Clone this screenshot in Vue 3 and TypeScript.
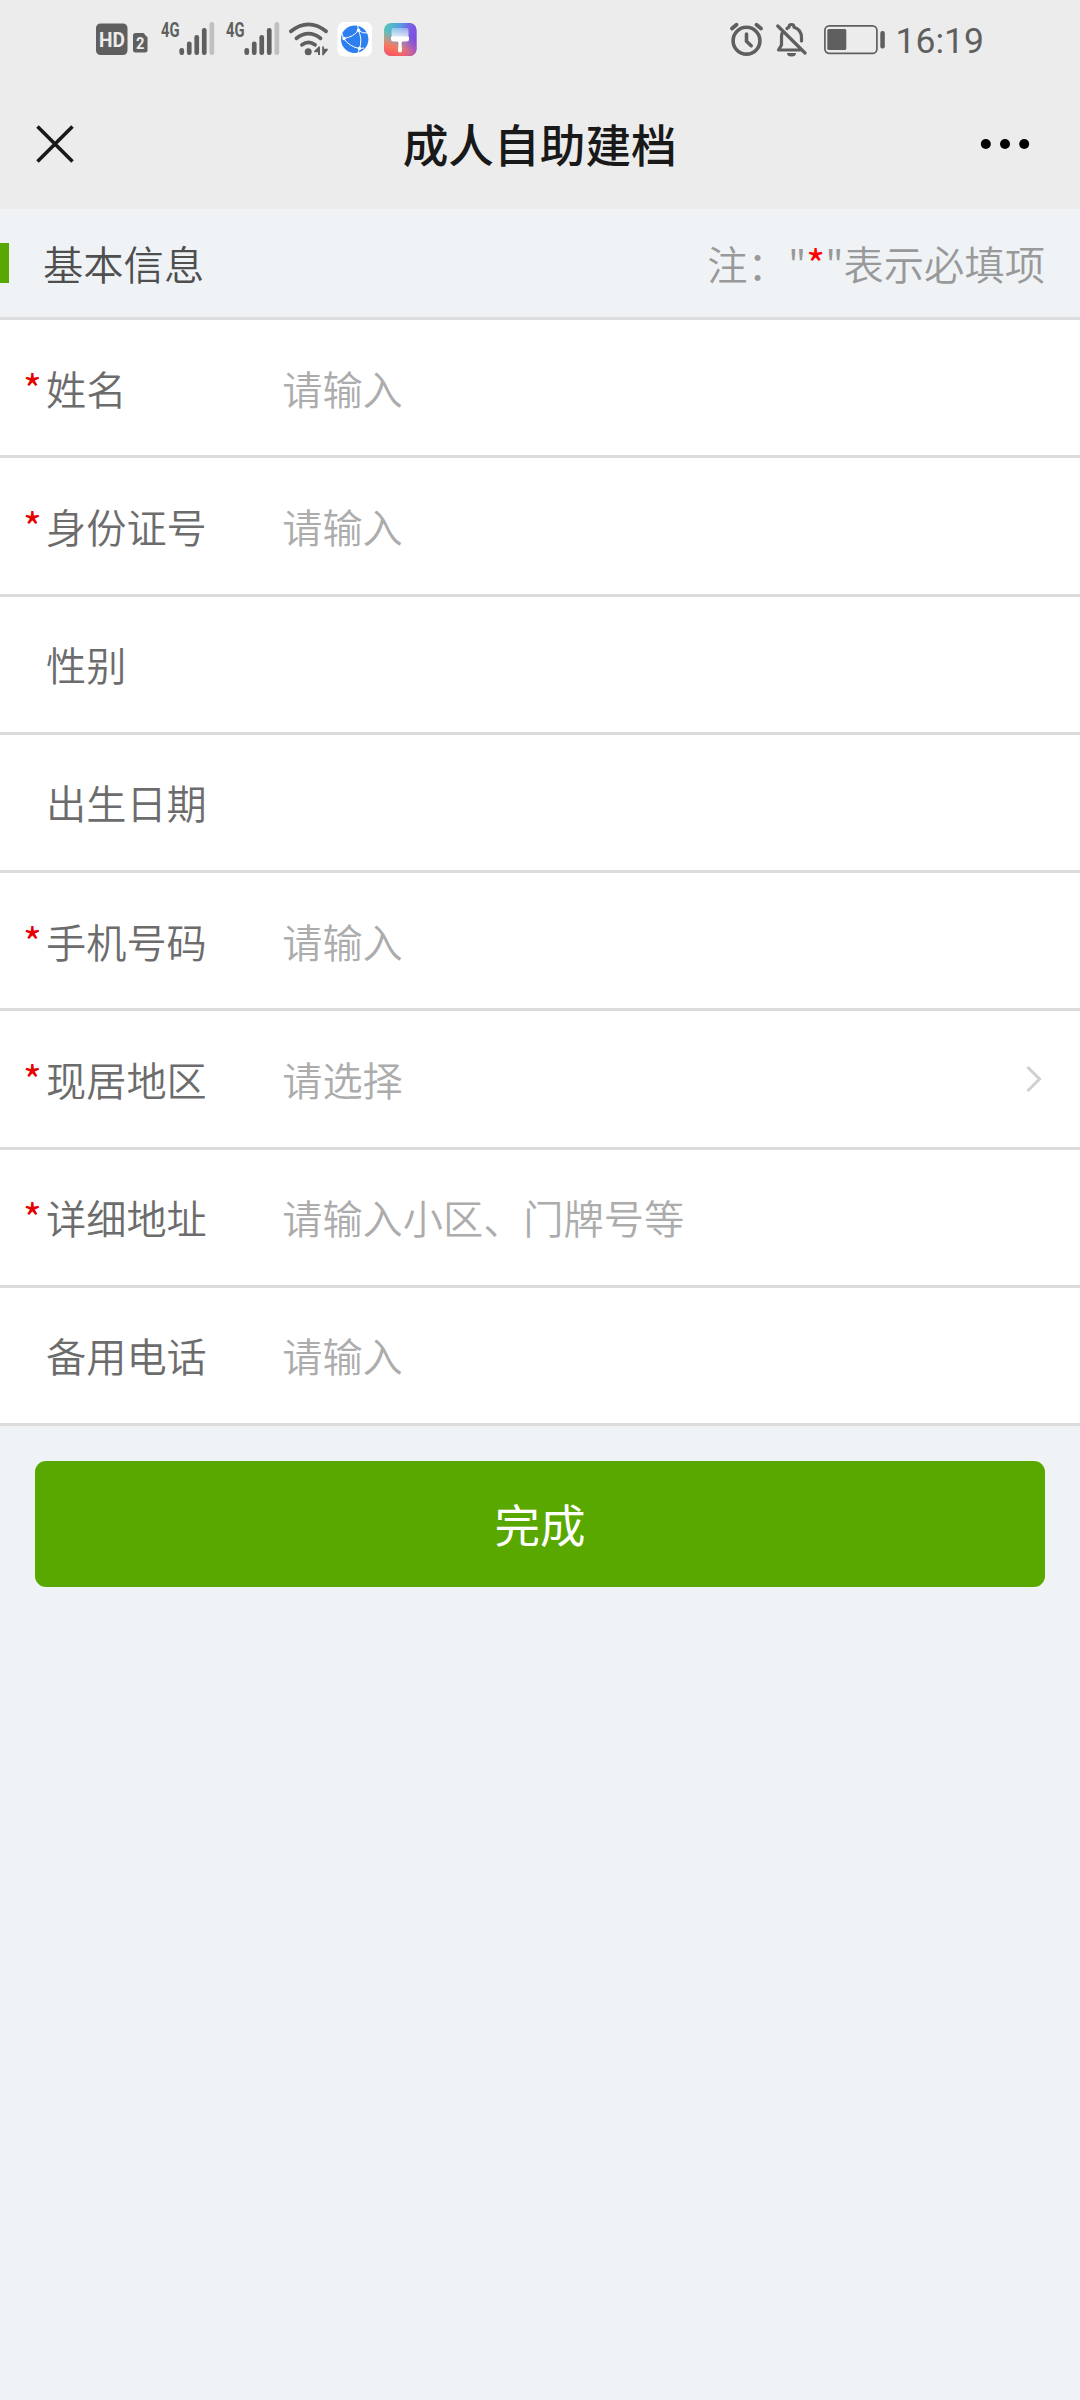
<script setup lang="ts">
interface Field {
  label: string
  required: boolean
  hint: string
  picker?: boolean
}

const fields: Field[] = [
  { label: '姓名', required: true, hint: '请输入' },
  { label: '身份证号', required: true, hint: '请输入' },
  { label: '性别', required: false, hint: '' },
  { label: '出生日期', required: false, hint: '' },
  { label: '手机号码', required: true, hint: '请输入' },
  { label: '现居地区', required: true, hint: '请选择', picker: true },
  { label: '详细地址', required: true, hint: '请输入小区、门牌号等' },
  { label: '备用电话', required: false, hint: '请输入' },
]

const sims = [1, 2]
</script>

<template>
  <div class="page">
    <header class="top">
      <div class="status">
        <div class="status-left">
          <svg class="hd" width="52" height="36" viewBox="0 0 52 36">
            <rect x="0" y="2.5" width="31.5" height="31.5" rx="4.5" fill="#5f5f5f" />
            <text x="3" y="25.5" font-size="20.5" font-weight="700" fill="#ececec" textLength="26" lengthAdjust="spacingAndGlyphs">HD</text>
            <path d="M39.500 12h8l4 4.500v12.500a2.500 2.500 0 0 1-2.500 2.500h-9.500a2.500 2.500 0 0 1-2.500-2.500v-14.500a2.500 2.500 0 0 1 2.500-2.500z" fill="#5f5f5f" />
            <text x="40" y="28" font-size="17" font-weight="700" fill="#ececec" textLength="8.500" lengthAdjust="spacingAndGlyphs">2</text>
          </svg>
          <svg v-for="s in sims" :key="s" class="signal" width="54" height="52" viewBox="0 -8 54 52">
            <text x="0" y="16" font-size="21" font-weight="700" fill="#5f5f5f" textLength="18.500" lengthAdjust="spacingAndGlyphs">4G</text>
            <g fill="#5f5f5f">
              <rect x="18.400" y="27" width="4.700" height="7" rx="2.200" />
              <rect x="25.900" y="20.500" width="4.700" height="13.500" rx="2.200" />
              <rect x="33.400" y="14" width="4.700" height="20" rx="2.200" />
              <rect x="40.900" y="7" width="4.700" height="27" rx="2.200" />
              <rect x="48.500" y="1" width="4.700" height="33" rx="2.200" fill="#c0c0c0" />
            </g>
          </svg>
          <svg class="wifi" width="40" height="36" viewBox="0 0 40 36">
            <g fill="none" stroke="#5f5f5f" stroke-width="3.800" stroke-linecap="round">
              <path d="M2 10.300Q19.500-3.500 37 10.300" />
              <path d="M7.500 17.300Q19.500 8 31.500 17.300" />
              <path d="M13 23.800Q19.500 19 26 23.800" />
            </g>
            <circle cx="19.200" cy="30.700" r="3.500" fill="#5f5f5f" />
            <path d="M31 25.500v8.500h-2v-2.800h-3.800v-1.200l4.500-4.500zM33.200 34.300v-8.800h1.800v2.300h3.800v1.200l-4.300 5.300z" fill="#5f5f5f" />
          </svg>
          <svg class="browser" width="36" height="36" viewBox="0 0 36 36">
            <rect x="0.500" y="1" width="34.500" height="34.500" rx="6.500" fill="#fff" />
            <circle cx="17.700" cy="18.300" r="13.700" fill="#2d7ff0" />
            <g fill="none" stroke="#fff" stroke-width="1">
              <path d="M6.500 17.500Q17 16 21.500 9" />
              <path d="M21.500 9.500Q25.500 18 22.500 28" />
              <path d="M6.500 17.500Q13 26 22.500 27.500L27 27" />
              <path d="M21.500 9L20.500 4M21.500 9.500Q25 12.500 30.500 12M6.500 17.500L5 12.500M22.500 28L21 32" />
            </g>
            <g fill="#fff">
              <circle cx="7" cy="17.500" r="1.700" /><circle cx="21.500" cy="9.300" r="1.700" /><circle cx="22.500" cy="27.500" r="1.700" />
            </g>
          </svg>
          <svg class="brush" width="33" height="36" viewBox="0 0 33 36">
            <defs>
              <linearGradient id="bg-h" x1="0" y1="0" x2="1" y2="0.300">
                <stop offset="0" stop-color="#55cdb0" /><stop offset="0.500" stop-color="#559be8" /><stop offset="1" stop-color="#6556e0" />
              </linearGradient>
              <linearGradient id="bg-v" x1="0.600" y1="0" x2="0.300" y2="1">
                <stop offset="0.350" stop-color="#f0a070" stop-opacity="0" /><stop offset="0.750" stop-color="#f5795f" /><stop offset="1" stop-color="#fa5562" />
              </linearGradient>
              <linearGradient id="bg-r" x1="0.500" y1="0" x2="1" y2="0">
                <stop offset="0" stop-color="#a04bd8" stop-opacity="0" /><stop offset="1" stop-color="#9047e0" />
              </linearGradient>
              <linearGradient id="bristle" x1="0" y1="0" x2="0" y2="1">
                <stop offset="0" stop-color="#fff" stop-opacity="0.350" /><stop offset="1" stop-color="#fff" stop-opacity="0.800" />
              </linearGradient>
            </defs>
            <rect x="0" y="2" width="32.500" height="33" rx="7" fill="url(#bg-h)" />
            <rect x="0" y="2" width="32.500" height="33" rx="7" fill="url(#bg-v)" />
            <rect x="0" y="2" width="32.500" height="33" rx="7" fill="url(#bg-r)" opacity="0.700" />
            <rect x="7.500" y="7" width="17" height="9" rx="2" fill="url(#bristle)" />
            <path d="M7 15.500h18v2.500q0 2.500-2.500 2.500h-4q-1 0-1 1.500l.5 7.500a2 2 0 0 1-4 0l.5-7.500q0-1.500-1-1.500h-4q-2.500 0-2.500-2.500z" fill="#fff" />
          </svg>
        </div>
        <div class="status-right">
          <svg width="34" height="36" viewBox="0 0 34 36">
            <g fill="none" stroke="#5f5f5f" stroke-linecap="round">
              <circle cx="16.500" cy="19.700" r="13.400" stroke-width="3.600" />
              <path d="M16.500 13v7.200l4.700 4.500" stroke-width="3.600" />
              <path d="M2 7.500L6.500 3.800M31 7.500L26.500 3.800" stroke-width="3.800" />
            </g>
          </svg>
          <svg class="bell" width="32" height="36" viewBox="0 0 32 36">
            <g fill="none" stroke="#5f5f5f" stroke-width="3.200" stroke-linecap="round" stroke-linejoin="round">
              <path d="M1.800 5L29 32" />
              <path d="M6 12.500Q5.500 14 5.500 16V24L2.500 29H24" />
              <path d="M11 7.500Q12 6.500 13 6.300Q13 3.500 15.500 3.500T18 6.300Q25.500 8.500 25.500 17V20" />
            </g>
            <path d="M11 32h9a4.500 3.500 0 0 1-9 0z" fill="#5f5f5f" />
          </svg>
          <svg class="battery" width="62" height="36" viewBox="0 0 62 36">
            <rect x="0.900" y="4.900" width="52" height="27.500" rx="4.500" fill="none" stroke="#5f5f5f" stroke-width="1.700" />
            <rect x="3.300" y="8" width="19" height="21" rx="1.500" fill="#5f5f5f" />
            <rect x="56.300" y="10" width="4.500" height="17.500" rx="2" fill="#5f5f5f" />
          </svg>
          <span class="clock">16:19</span>
        </div>
      </div>
      <nav class="nav">
        <svg width="38" height="38" viewBox="0 0 38 38">
          <path d="M1.500 1.500l35 35M36.500 1.500l-35 35" stroke="#191919" stroke-width="3.600" />
        </svg>
        <h1>成人自助建档</h1>
        <svg width="50" height="12" viewBox="0 0 50 12">
          <circle cx="5.800" cy="6" r="5" /><circle cx="25" cy="6" r="5" /><circle cx="44.200" cy="6" r="5" />
        </svg>
      </nav>
    </header>

    <section class="section-head">
      <i class="accent"></i>
      <h2>基本信息</h2>
      <p>注："<b>*</b>"表示必填项</p>
    </section>

    <main class="form">
      <div v-for="f in fields" :key="f.label" class="row">
        <span class="star">{{ f.required ? '*' : '' }}</span>
        <span class="label">{{ f.label }}</span>
        <span class="hint">{{ f.hint }}</span>
        <svg v-if="f.picker" class="chevron" width="16" height="28" viewBox="0 0 16 28">
          <path d="M1.500 2L13.500 14L1.500 26" fill="none" stroke="#d0d0d0" stroke-width="3" />
        </svg>
      </div>
    </main>

    <button class="submit" type="button">完成</button>
  </div>
</template>

<style>
body {
  background: #eff3f6;
}
</style>

<style scoped>
.page {
  width: 1080px;
  height: 2400px;
  background: #eff3f6;
  font-family: "Noto Sans CJK SC", sans-serif;
  overflow: hidden;
}
.page svg {
  display: block;
  flex: none;
}
.top {
  height: 209px;
  background: #ececec;
}
.status {
  display: flex;
  justify-content: space-between;
  height: 78px;
  padding: 0 96px 0 95.700px;
  font-family: Roboto, sans-serif;
  align-items: center;
}
.status-left,
.status-right {
  display: flex;
  align-items: center;
}
.signal {
  margin-left: 11px;
}
.hd + .signal {
  margin-left: 13px;
}
.wifi {
  margin-left: 9px;
}
.browser {
  margin-left: 8px;
}
.brush {
  margin-left: 11px;
}
.bell {
  margin-left: 12px;
}
.battery {
  margin-left: 16px;
}
.clock {
  margin-left: 10px;
  padding-top: 3px;
  font-size: 35.500px;
  line-height: 36px;
  color: #5f5f5f;
}
.nav {
  display: grid;
  grid-template-columns: 1fr auto 1fr;
  align-items: center;
  height: 131px;
  padding: 0 50px 0 35.500px;
}
.nav > :last-child {
  justify-self: end;
}
.nav h1 {
  margin: 0 0 1px 14px;
  font-size: 45.700px;
  line-height: 60px;
  font-weight: 500;
  color: #191919;
}
.section-head {
  display: flex;
  align-items: center;
  box-sizing: border-box;
  height: 111px;
  padding-right: 35px;
  border-bottom: 3px solid #dcdddf;
  font-size: 40.300px;
  line-height: 60px;
}
.accent {
  width: 9px;
  height: 40px;
  background: #58a800;
}
.section-head h2 {
  margin: 0 auto 0 34px;
  font-size: inherit;
  font-weight: 350;
  color: #4f4f4f;
}
.section-head p {
  margin: 0;
  font-weight: 350;
  color: #999;
}
.section-head b {
  font-weight: 400;
  color: #f00;
}
.row {
  display: flex;
  align-items: center;
  box-sizing: border-box;
  height: 138.250px;
  padding: 0 38px 0 23px;
  background: #fff;
  border-bottom: 3px solid #dcdcdc;
  font-size: 40.200px;
  line-height: 60px;
  font-weight: 350;
}
.star {
  width: 23px;
  color: #e60000;
  font-weight: 400;
}
.label {
  width: 236.200px;
  color: #6c6c6c;
}
.hint {
  flex: 1;
  color: #acacac;
}
.submit {
  display: block;
  width: 1010px;
  height: 126px;
  margin: 35px auto 0;
  padding: 0 0 2px;
  border: 0;
  border-radius: 11px;
  background: #58a800;
  color: #fff;
  font: 400 45.500px/124px "Noto Sans CJK SC", sans-serif;
}
</style>
